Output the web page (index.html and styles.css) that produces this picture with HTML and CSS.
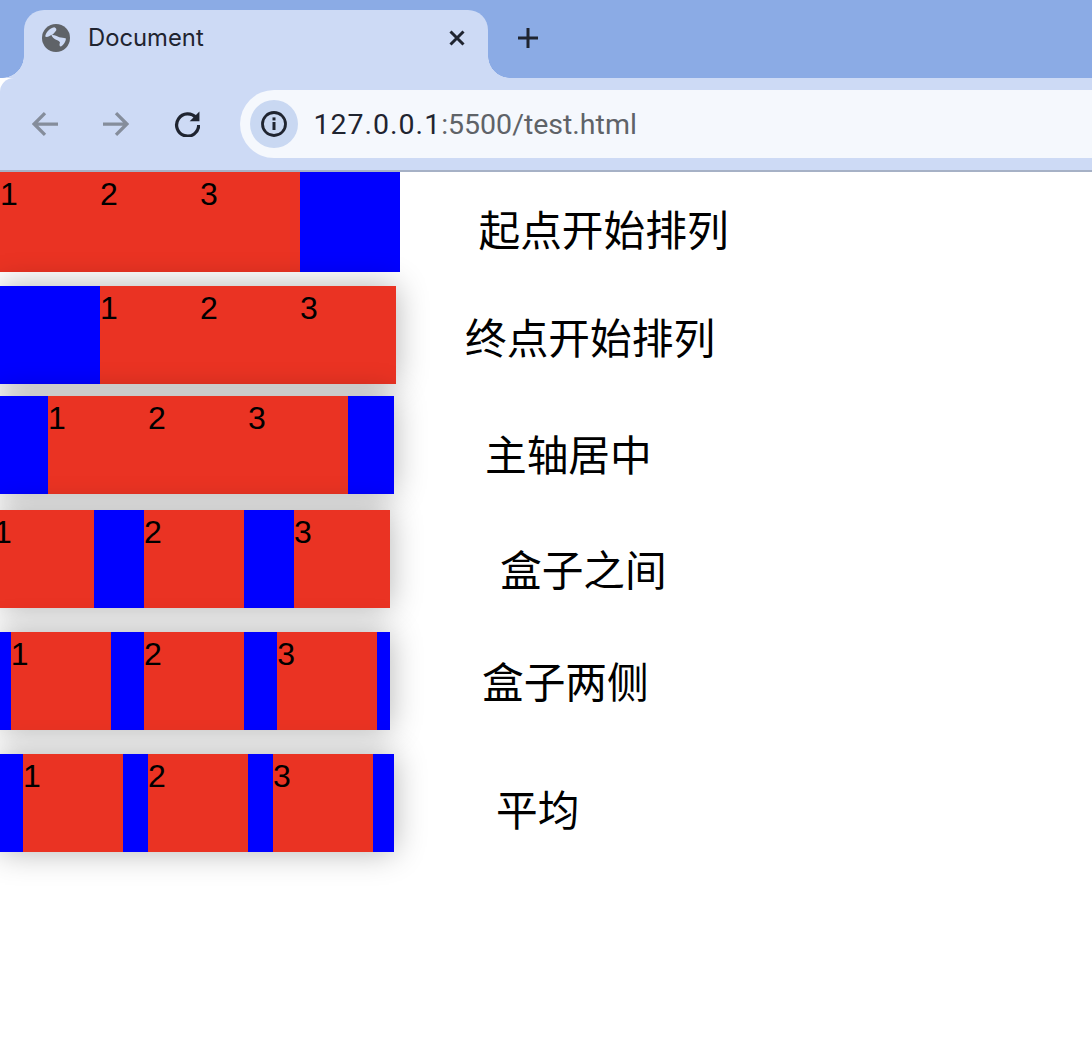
FILE: index.html
```html
<!DOCTYPE html>
<html lang="zh-CN">
<head>
    <meta charset="UTF-8">
    <title>Document</title>
    <link rel="stylesheet" href="styles.css">
</head>
<body>
    <div class="tabstrip">
        <div class="tab">
            <svg class="tab-globe" viewBox="0 0 28 28">
                <circle cx="14" cy="14" r="14" fill="#5f6368"/>
                <path d="M3.2 12.6 C3.8 8.5 7.5 4 12.3 3.2 C14.5 4 15 6 13.6 7.2 C12 8.8 11.5 10.5 9.5 11 C7.5 11.6 5.5 13.8 3.2 12.6Z" fill="#cddaf5"/>
                <path d="M9.5 11.2 C12 10.6 15 12.4 17.3 13.3 C19.5 14 21.5 13.6 24 14.6 C23.8 17.5 21.8 20.8 19 22.6 C17.2 22.6 17.2 20.4 18 18.4 C17 16.6 15 16.6 13.6 15.6 C12 14.6 10 13 9.5 11.2Z" fill="#cddaf5"/>
            </svg>
            <span class="tab-title">Document</span>
            <svg class="tab-close" viewBox="0 0 16 16">
                <path d="M1.5 1.5 L14.5 14.5 M14.5 1.5 L1.5 14.5" stroke="#1f2430" stroke-width="3" fill="none"/>
            </svg>
        </div>
        <svg class="new-tab" viewBox="0 0 20 20">
            <path d="M10 0 V20 M0 10 H20" stroke="#1f2430" stroke-width="3" fill="none"/>
        </svg>
    </div>

    <div class="toolbar">
        <svg class="nav-icon" viewBox="0 0 24 24">
            <path d="M24 12 H2 M12 2 L2 12 L12 22" stroke="#858d9b" stroke-width="3" fill="none"/>
        </svg>
        <svg class="nav-icon" viewBox="0 0 24 24">
            <path d="M0 12 H22 M12 2 L22 12 L12 22" stroke="#858d9b" stroke-width="3" fill="none"/>
        </svg>
        <svg class="nav-icon" viewBox="0 0 24 24">
            <path d="M20.5 6.5 A10.2 10.2 0 1 0 22.8 13" stroke="#1f2430" stroke-width="3" fill="none"/>
            <path d="M23.5 0.5 V9.5 H14.5 Z" fill="#1f2430"/>
        </svg>
        <div class="omnibox">
            <div class="site-info">
                <svg class="site-info-icon" viewBox="0 0 26 26">
                    <circle cx="13" cy="13" r="11.5" stroke="#1f2430" stroke-width="2.8" fill="none"/>
                    <rect x="11.5" y="11" width="3" height="8" fill="#1f2430"/>
                    <rect x="11.5" y="6.4" width="3" height="3" fill="#1f2430"/>
                </svg>
            </div>
            <span class="url"><span class="url-host">127.0.0.1</span>:5500/test.html</span>
        </div>
    </div>

    <div class="row row-start">
        <div class="clip">
            <div class="box">
                <div class="item">1</div>
                <div class="item">2</div>
                <div class="item">3</div>
            </div>
        </div>
        <p class="label">起点开始排列</p>
    </div>
    <div class="row row-end">
        <div class="clip">
            <div class="box">
                <div class="item">1</div>
                <div class="item">2</div>
                <div class="item">3</div>
            </div>
        </div>
        <p class="label">终点开始排列</p>
    </div>
    <div class="row row-center">
        <div class="clip">
            <div class="box">
                <div class="item">1</div>
                <div class="item">2</div>
                <div class="item">3</div>
            </div>
        </div>
        <p class="label">主轴居中</p>
    </div>
    <div class="row row-between">
        <div class="clip">
            <div class="box">
                <div class="item">1</div>
                <div class="item">2</div>
                <div class="item">3</div>
            </div>
        </div>
        <p class="label">盒子之间</p>
    </div>
    <div class="row row-around">
        <div class="clip">
            <div class="box">
                <div class="item">1</div>
                <div class="item">2</div>
                <div class="item">3</div>
            </div>
        </div>
        <p class="label">盒子两侧</p>
    </div>
    <div class="row row-evenly">
        <div class="clip">
            <div class="box">
                <div class="item">1</div>
                <div class="item">2</div>
                <div class="item">3</div>
            </div>
        </div>
        <p class="label">平均</p>
    </div>
</body>
</html>
```

FILE: styles.css
```css
body {
    margin: 0;
    min-height: 100vh;
    background-color: #fff;
    font-family: "Liberation Sans", Arial, sans-serif;
}

/* browser chrome */
.tabstrip {
    display: flex;
    align-items: flex-start;
    height: 78px;
    background-color: #8babe5;
}

.tab {
    position: relative;
    display: flex;
    align-items: center;
    box-sizing: border-box;
    width: 464px;
    height: 68px;
    margin: 10px 0 0 24px;
    padding: 0 23px 13px 18px;
    background-color: #cddaf5;
    border-radius: 20px 20px 0 0;
}

.tab::before,
.tab::after {
    content: "";
    position: absolute;
    bottom: 0;
    width: 22px;
    height: 22px;
}

.tab::before {
    left: -22px;
    background: radial-gradient(circle at 0 0, transparent 21.5px, #cddaf5 22px);
}

.tab::after {
    right: -22px;
    background: radial-gradient(circle at 100% 0, transparent 21.5px, #cddaf5 22px);
}

.tab-globe {
    width: 28px;
    height: 28px;
}

.tab-title {
    flex: 1;
    margin-left: 18px;
    color: #1f2430;
    font-family: Inter, "Noto Sans", sans-serif;
    font-size: 23.8px;
}

.tab-close {
    width: 16px;
    height: 16px;
}

.new-tab {
    width: 20px;
    height: 20px;
    margin: 28px 0 0 30px;
}

.toolbar {
    display: flex;
    align-items: center;
    box-sizing: border-box;
    height: 94px;
    padding: 12px 0 12px 32px;
    background-color: #cddaf5;
    border-top-left-radius: 14px;
    border-bottom: 2px solid #a6b1c6;
}

.nav-icon {
    width: 26px;
    height: 26px;
    margin-right: 45px;
}

.nav-icon:nth-child(3) {
    margin-right: 40px;
}

.omnibox {
    display: flex;
    align-items: center;
    flex: 1;
    height: 68px;
    padding-left: 10px;
    background-color: #f5f8fd;
    border-radius: 34px 0 0 34px;
}

.site-info {
    display: flex;
    align-items: center;
    justify-content: center;
    width: 48px;
    height: 48px;
    border-radius: 50%;
    background-color: #c9d8f2;
}

.site-info-icon {
    width: 26px;
    height: 26px;
}

.url {
    margin-left: 15.5px;
    color: #5f6368;
    font-family: Roboto, "Noto Sans", sans-serif;
    font-size: 28.5px;
}

.url-host {
    color: #1f2430;
    letter-spacing: 1px;
}

/* flex demo rows */
.row {
    display: grid;
    grid-template-columns: 400px 1fr;
    align-items: start;
}

.clip {
    overflow: hidden;
    height: 98px;
    box-shadow: 0 0 30px rgba(0, 0, 0, 0.3);
}

.box {
    display: flex;
    width: 400px;
    height: 100px;
    background-color: #0000ff;
}

.item {
    flex: none;
    box-sizing: border-box;
    width: 100px;
    height: 100px;
    padding-top: 4px;
    background-color: #ea3323;
    color: #000;
    font-size: 32px;
}

.label {
    margin: 0;
    color: #000;
    font-family: "Noto Sans CJK SC", sans-serif;
    font-size: 41.7px;
    line-height: 60px;
    white-space: nowrap;
}

.row-start .clip {
    width: 400px;
    height: 100px;
    box-shadow: none;
}
.row-start .box { justify-content: flex-start; }
.row-start .label { margin: 26px 0 0 78.5px; }

.row-end { margin-top: 14px; }
.row-end .clip { width: 396px; }
.row-end .box { justify-content: flex-end; }
.row-end .label { margin: 20px 0 0 65px; }

.row-center { margin-top: 12px; }
.row-center .clip { width: 394px; }
.row-center .box { justify-content: center; margin-left: -2px; }
.row-center .label { margin: 27px 0 0 85px; }

.row-between { margin-top: 16px; }
.row-between .clip { width: 390px; }
.row-between .box { justify-content: space-between; margin-left: -6px; }
.row-between .label { margin: 28px 0 0 100px; }

.row-around { margin-top: 24px; }
.row-around .clip { width: 390px; }
.row-around .box { justify-content: space-around; margin-left: -6px; }
.row-around .label { margin: 18px 0 0 82px; }

.row-evenly { margin-top: 24px; }
.row-evenly .clip { width: 394px; }
.row-evenly .box { justify-content: space-evenly; margin-left: -2px; }
.row-evenly .label { margin: 24px 0 0 96px; }
```
